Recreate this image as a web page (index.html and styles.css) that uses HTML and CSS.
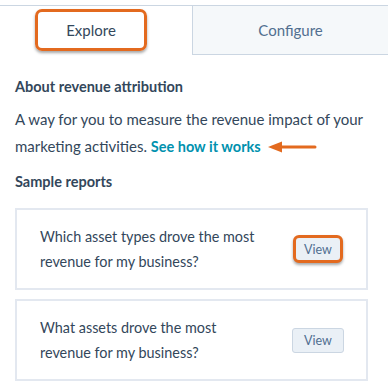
FILE: index.html
```html
<!DOCTYPE html>
<html lang="en">
<head>
<meta charset="UTF-8">
<meta name="viewport" content="width=device-width, initial-scale=1.0">
<title>Revenue Attribution</title>
<link rel="stylesheet" href="styles.css">
</head>
<body>

<div class="tabs">
    <div class="tab tab-active">
        <span class="callout">Explore</span>
    </div>
    <div class="tab tab-inactive">Configure</div>
</div>

<div class="content">
    <h4>About revenue attribution</h4>
    <p class="intro">
        A way for you to measure the revenue impact of your marketing activities.
        <a href="#" class="link">See how it works</a><svg class="arrow" width="50" height="12" viewBox="0 0 50 12">
            <path d="M14 6 H48" stroke="#e36a1f" stroke-width="3" stroke-linecap="round"/>
            <path d="M1 6 L15 0.5 L15 11.5 Z" fill="#e36a1f"/>
        </svg>
    </p>

    <h4>Sample reports</h4>

    <!-- Report cards -->
    <div class="report">
        <p>Which asset types drove the most revenue for my business?</p>
        <a href="#" class="view-button marked">View</a>
    </div>
    <div class="report">
        <p>What assets drove the most revenue for my business?</p>
        <a href="#" class="view-button">View</a>
    </div>
</div>

</body>
</html>
```

FILE: styles.css
```css
body {
    font-family: Lato, "Open Sans", sans-serif;
    margin: 0;
    padding: 0;
    background-color: #fff;
    color: #33475b;
}
.tabs {
    display: flex;
    margin-top: 5px;
    border-top: 1px solid #cbd6e2;
    height: 49px;
}
.tab {
    display: flex;
    align-items: center;
    justify-content: center;
    font-size: 15px;
}
.tab-active {
    width: 192px;
}
.tab-inactive {
    flex: 1;
    background-color: #f5f8fa;
    border-left: 1px solid #cbd6e2;
    border-bottom: 1px solid #cbd6e2;
    color: #516f90;
}
.callout {
    display: flex;
    align-items: center;
    justify-content: center;
    width: 106px;
    height: 36px;
    margin-left: -10px;
    margin-top: -2px;
    border: 3px solid #e36a1f;
    border-radius: 7px;
    box-shadow: 0 2px 3px rgba(0, 0, 0, 0.35);
}
.content {
    padding: 0 20px 0 15px;
}
h4 {
    font-size: 14.5px;
    font-weight: 700;
    line-height: 20px;
    margin: 0;
}
.content h4:first-child {
    margin-top: 22px;
}
.intro {
    font-size: 15px;
    line-height: 27px;
    margin: 9px 0 12px;
}
.link {
    color: #0091ae;
    font-size: 14.5px;
    font-weight: 700;
    text-decoration: none;
}
.arrow {
    vertical-align: -1px;
    margin-left: 6px;
}
.report {
    display: flex;
    align-items: center;
    justify-content: space-between;
    height: 78px;
    border: 2px solid #e3e8f0;
    padding: 0 22px 0 23px;
    margin-top: 16px;
}
.report + .report {
    margin-top: 9px;
}
.report p {
    width: 225px;
    font-size: 14.4px;
    line-height: 25px;
    margin: 0;
}
.view-button {
    display: flex;
    align-items: center;
    justify-content: center;
    width: 50px;
    height: 23px;
    background-color: #eaf0f6;
    border: 1px solid #cbd6e2;
    border-radius: 3px;
    color: #506e91;
    font-size: 12.5px;
    text-decoration: none;
}
.view-button.marked {
    width: 44px;
    height: 22px;
    margin-right: 1px;
    border: 3px solid #e36a1f;
    border-radius: 6px;
    box-shadow: 0 2px 3px rgba(0, 0, 0, 0.35);
}
```
